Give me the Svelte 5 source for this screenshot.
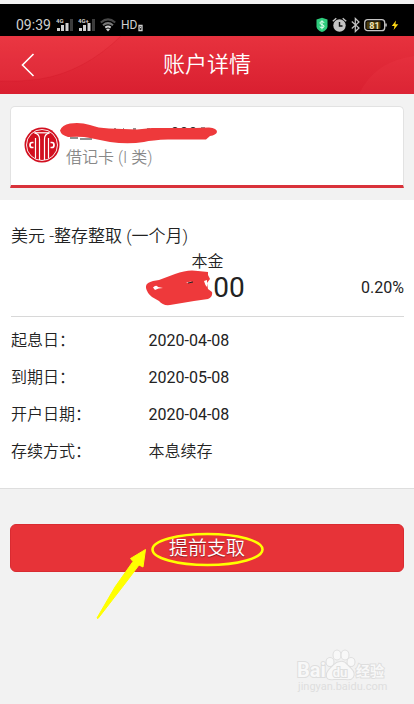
<script>
  const account = {
    kind: '借记卡 (I 类)',
    product: '美元 -整存整取 (一个月)',
    rate: '0.20%',
  };

  const rows = [
    { label: '起息日：', value: '2020-04-08', numeric: true },
    { label: '到期日：', value: '2020-05-08', numeric: true },
    { label: '开户日期：', value: '2020-04-08', numeric: true },
    { label: '存续方式：', value: '本息续存' },
  ];

  const signals = ['4G', '4G+'];
</script>

<div class="page">
  <div class="status">
    <div class="group start">
      <span class="time">09:39</span>
      {#each signals as name}
        <svg width="17" height="16" viewBox="0 0 17 16" aria-hidden="true">
          <text class="net" x="0" y="6">{name}</text>
          <path d="M1 11h3v3H1zM5 8h3v6H5z" fill="#d0d0d0" />
          <path d="M9.500 6h3v8h-3z" fill="#d0d0d0" />
          <path d="M14 2h3v12h-3z" fill="#3c3c3c" />
        </svg>
      {/each}
      <svg width="16" height="16" viewBox="0 0 16 16" fill="none" stroke-width="2" aria-hidden="true">
        <path d="M.8 5.500Q8-.8 15.200 5.500" stroke="#484848" />
        <path d="M3 8.300q5-4.300 10 0" stroke="#777" />
        <path d="M5.300 10.600q2.700-2.200 5.400 0" stroke="#d0d0d0" />
        <path d="M6 12.200q2-1.400 4 0L8 14.500z" fill="#d0d0d0" />
      </svg>
      <span class="hd">HD</span>
      <svg class="slot" width="5" height="16" viewBox="0 0 5 16" aria-hidden="true">
        <path d="M1 8.500h3v5H1zM2 10.500h1" fill="none" stroke="#d0d0d0" stroke-width="1.300" />
      </svg>
    </div>
    <div class="group">
      <svg width="12" height="16" viewBox="0 0 12 16" aria-hidden="true">
        <path d="M6 .8 11.500 2.500V10Q10.500 13.500 6 15 1.500 13.500.5 10V2.500z" fill="#2ecb7c" />
        <path d="M8.300 5.500Q6 3.600 4 5.300q-.9 1.500 2 2.300 3 .8 1.900 2.500Q6 11.700 3.700 9.900M6 3.300v9" fill="none" stroke="#e6fff0" stroke-width="1" />
      </svg>
      <svg width="15" height="16" viewBox="0 0 15 16" aria-hidden="true">
        <circle cx="7.500" cy="8.500" r="6.200" fill="#c4c4c4" />
        <path d="M.8 4.200 4.300 1.200M14.200 4.200 10.700 1.200" stroke="#c4c4c4" stroke-width="1.400" />
        <path d="M7.500 5v4h3" fill="none" stroke="#111" stroke-width="1.400" />
      </svg>
      <svg width="9" height="16" viewBox="0 0 9 16" aria-hidden="true">
        <path d="m.8 4.500 7.200 6.500-3.700 3.500V1.500L8 5 .8 11.500" fill="none" stroke="#c4c4c4" stroke-width="1.200" />
      </svg>
      <svg width="23" height="16" viewBox="0 0 23 16" aria-hidden="true">
        <rect x=".7" y="2.700" width="20" height="11" rx="3" fill="#000" stroke="#c4c4c4" stroke-width="1.300" />
        <rect x="2.500" y="4.500" width="14" height="7.500" rx="1" fill="#4b3b0b" />
        <path d="M22 6.500v3" stroke="#c4c4c4" stroke-width="1.500" />
        <text class="level" x="10.500" y="11.500">81</text>
      </svg>
      <svg width="8" height="16" viewBox="0 0 8 16" aria-hidden="true">
        <path d="M5 3.500.8 9h2.700l-.9 4L7.300 7.300H4.400z" fill="#ffd914" />
      </svg>
    </div>
  </div>

  <header>
    <svg class="arc left" width="130" height="58" viewBox="0 0 130 58" aria-hidden="true">
      <path d="M0 0H121Q84 36 40 43 20 46 0 45z" fill="#ff5965" fill-opacity=".12" />
      <path d="M121 0Q84 36 40 43 20 46 0 45" fill="none" stroke="#c9101e" stroke-opacity=".2" />
    </svg>
    <svg class="arc right" width="64" height="58" viewBox="0 0 64 58" aria-hidden="true">
      <path d="M9 58Q25 25 64 20V58z" fill="#ff5965" fill-opacity=".1" />
    </svg>
    <button class="back" aria-label="返回">
      <svg width="14" height="24" viewBox="0 0 14 24" aria-hidden="true">
        <path d="M12.500 1 1.500 12l11 11" fill="none" stroke="#fff" stroke-width="1.600" />
      </svg>
    </button>
    <h1>账户详情</h1>
  </header>

  <main>
    <section class="card">
      <svg width="36" height="36" viewBox="0 0 36 36" aria-hidden="true">
        <circle cx="18" cy="18" r="17.500" fill="#d20f1f" />
        <circle cx="18" cy="18" r="15.500" fill="none" stroke="#fff" stroke-width=".9" />
        <g fill="none" stroke="#fff" stroke-width="1.200">
          <path d="M10.500 5.800Q15.500 7 15.500 12V33M25.500 5.800Q20.500 7 20.500 12V33" />
          <path d="M11.500 11V31.500M24.500 11V31.500" />
          <path d="M10.500 5.800H25.500" />
        </g>
        <path d="M9.500 15.500H8Q6 15.500 6 18t2 2.500h1.500M26.500 15.500H28q2 0 2 2.500t-2 2.500h-1.500" fill="none" stroke="#fff" stroke-width="1.700" />
      </svg>
      <div class="holder">
        <svg class="number" width="158" height="24" viewBox="0 0 158 24" role="img" aria-label="卡号已隐藏">
          <path d="M10 16h8M20 17h12M54 7h2M63 7h1M73 7h3M87 7h3M105 7h1M113 6.300q2-1.500 4 0M122 6.300q2-1.500 4 0M131 6.300q2-1.500 4 0M141 6h4" fill="none" stroke="#222" stroke-width="1.200" />
          <path d="M0 8.500Q2 3 10 1.500 20-.2 30 3 38 6 49 6.500L77 7.500 92 6H135L149 5.500Q157 6 157 10 156 13 150 14L146 17.500H108Q92 18 84 20 68 22.500 50 20L30 16Q22 14 8 15 1 13 0 8.500z" fill="#ee393b" />
        </svg>
        <span class="kind">{account.kind}</span>
      </div>
    </section>

    <section class="detail">
      <h2>{account.product}</h2>
      <div class="summary">
        <div class="principal">
          <span>本金</span>
          <div class="amount">
            <svg width="67" height="36" viewBox="0 0 67 36" role="img" aria-label="金额已隐藏">
              <path d="M0 18Q-1 13 7 11L13 10 29 4Q42-1 52 1L62 2V5L64 9 61 13 62 19 66 22Q67 27 62 29L48 31 24 35Q17 36 13 31L6 27Q1 23 0 18z" fill="#ee393b" />
              <path d="M7 17.500q3-3 5-.5l5 1q-5 0-8 2zM40 13q4-2 6-1l-5 1zM58 11l3-1v7q-2-2-3-6z" fill="#fff" />
              <path d="m42 13 5-1" stroke="#222" />
            </svg>
            <span>00</span>
          </div>
        </div>
        <span class="rate">{account.rate}</span>
      </div>
      <dl>
        {#each rows as row}
          <div class="row">
            <dt>{row.label}</dt>
            <dd class:numeric={row.numeric}>{row.value}</dd>
          </div>
        {/each}
      </dl>
    </section>

    <div class="action">
      <button class="withdraw">提前支取</button>
      <svg class="marker" width="170" height="92" viewBox="0 0 170 92" aria-hidden="true">
        <ellipse cx="111.500" cy="18.500" rx="55" ry="15.500" fill="none" stroke="#ff0" stroke-width="2.600" />
        <path d="M1 87 19 56 37 30.500 34.500 27.500 49.500 18.500 47 36 43 34 31 50 2 87.500z" fill="#ff0" stroke="#ff0" stroke-linejoin="round" />
      </svg>
    </div>
  </main>

  <svg class="watermark" width="94" height="46" viewBox="0 0 94 46" role="img" aria-label="Baidu 经验">
    <g class="ink">
      <ellipse cx="34" cy="14" rx="3.500" ry="4" />
      <ellipse cx="41" cy="7" rx="3.500" ry="4.500" />
      <ellipse cx="49" cy="7" rx="3.500" ry="4.500" />
      <ellipse cx="55" cy="14" rx="3.500" ry="4" />
      <path d="M44 14q4-1 7 3l4 4q4 4 2 8-2 3-7 2H38q-6 1-7-2-1-4 3-8l4-4q3-3 6-3z" />
      <text class="brand" x="1" y="29">Bai</text>
      <text class="paw" x="44" y="29">du</text>
      <text class="word" x="60" y="28">经验</text>
    </g>
    <text class="url" x="2" y="42">jingyan.baidu.com</text>
  </svg>
</div>

<style>
  :global(body) {
    margin: 0;
    background: #f2f2f2;
  }
  .page {
    display: flex;
    flex-direction: column;
    box-sizing: border-box;
    min-height: 100vh;
    padding: 4px 0 10px;
    color: #222;
    font-family: Roboto, 'Noto Sans CJK SC', sans-serif;
    font-size: 16px;
    font-weight: 350;
    line-height: 20px;
  }
  svg {
    display: block;
    flex: none;
  }
  h1,
  h2,
  dl,
  dd {
    margin: 0;
    font-weight: inherit;
  }
  button {
    border: 0;
    font-family: inherit;
    font-weight: inherit;
    cursor: pointer;
  }
  .time,
  .hd,
  .amount,
  .rate,
  .numeric {
    font-weight: 400;
  }

  .status {
    display: flex;
    justify-content: space-between;
    align-items: center;
    box-sizing: border-box;
    height: 32px;
    padding: 10px 15px 0 16px;
    background: #000;
    color: #d0d0d0;
  }
  .group {
    display: flex;
    align-items: center;
    gap: 4px;
  }
  .start {
    gap: 5px;
  }
  .time {
    font-size: 14px;
  }
  .hd {
    font-size: 12px;
  }
  .slot {
    margin-left: -4px;
  }
  .net {
    fill: #d0d0d0;
    font-size: 6px;
    font-weight: 700;
  }
  .level {
    fill: #eee2b8;
    font-size: 9px;
    font-weight: 700;
    text-anchor: middle;
  }

  header {
    position: relative;
    display: flex;
    align-items: center;
    justify-content: center;
    height: 58px;
    background: linear-gradient(#e7323e, #d91f30);
    color: #fff;
  }
  .arc {
    position: absolute;
    top: 0;
  }
  .arc.left {
    left: 0;
  }
  .arc.right {
    right: 0;
  }
  .back {
    position: absolute;
    left: 13px;
    padding: 8px;
    background: none;
  }
  h1 {
    position: relative;
    font-size: 22px;
    line-height: 28px;
  }

  .card {
    display: flex;
    align-items: center;
    gap: 6px;
    box-sizing: border-box;
    height: 82px;
    margin: 12px 10px;
    padding: 0 13px 2px;
    border: 1px solid #e2e2e2;
    border-bottom: 3px solid #d9323a;
    border-radius: 5px 5px 0 0;
    background: #fff;
  }
  .holder {
    display: flex;
    flex-direction: column;
    gap: 2px;
    min-width: 0;
  }
  .number {
    margin-left: -6px;
  }
  .kind {
    color: #888;
  }

  .detail {
    padding: 24px 10px 18px 11px;
    border-bottom: 1px solid #dedede;
    background: #fff;
  }
  h2 {
    font-size: 17px;
    line-height: 24px;
  }
  .summary {
    display: grid;
    grid-template-columns: 1fr auto 1fr;
    align-items: end;
    padding-bottom: 12px;
    border-bottom: 1px solid #d8d8d8;
  }
  .principal {
    display: flex;
    flex-direction: column;
    grid-column: 2;
    align-items: center;
    padding-top: 4px;
  }
  .amount {
    display: flex;
    justify-content: center;
    align-items: center;
    height: 32px;
    margin-right: 24px;
    font-size: 28px;
  }
  .rate {
    padding-bottom: 6px;
    text-align: right;
  }
  dl {
    padding-top: 5px;
  }
  .row {
    display: grid;
    grid-template-columns: 35% 1fr;
    line-height: 37px;
  }

  .action {
    position: relative;
    padding: 35px 10px 0;
  }
  .withdraw {
    display: block;
    width: 100%;
    height: 48px;
    padding-bottom: 4px;
    border: 1px solid #d92b31;
    border-radius: 6px;
    background: #e73338;
    color: #fff;
    font-size: 19px;
    text-shadow: 0 1px 1px #8a1c20;
  }
  .marker {
    position: absolute;
    top: 42px;
    left: 50%;
    margin-left: -111px;
    pointer-events: none;
  }

  .watermark {
    align-self: flex-end;
    margin: auto 24px 0 0;
  }
  .ink {
    fill: #f8f8f8;
    stroke: #dedede;
    stroke-width: 2px;
    paint-order: stroke;
  }
  .brand {
    font-size: 20px;
    font-weight: 700;
  }
  .paw {
    font-size: 13px;
    font-weight: 700;
    text-anchor: middle;
  }
  .word {
    font-size: 14px;
    font-weight: 700;
  }
  .url {
    fill: #dedede;
    font-size: 11px;
    font-weight: 400;
  }
</style>
